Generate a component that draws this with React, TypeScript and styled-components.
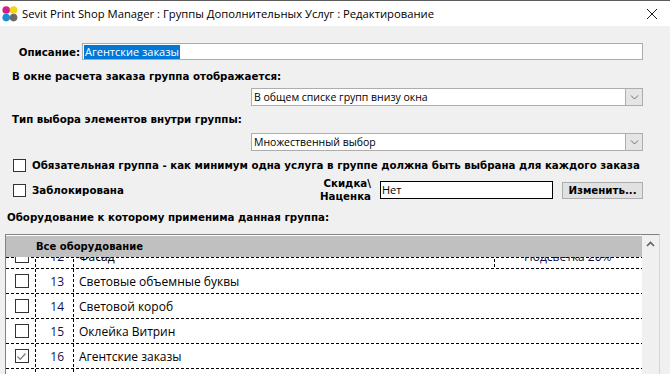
import React from "react";
import styled, { createGlobalStyle } from "styled-components";

type Row = {
  id: number;
  name: string;
  checked: boolean;
};

const ROWS: Row[] = [
  { id: 13, name: "Световые объемные буквы", checked: false },
  { id: 14, name: "Световой короб", checked: false },
  { id: 15, name: "Оклейка Витрин", checked: false },
  { id: 16, name: "Агентские заказы", checked: true },
];

const GlobalStyle = createGlobalStyle`
  html, body {
    margin: 0;
    padding: 0;
    background: #f0f0f0;
  }
  * {
    box-sizing: border-box;
  }
`;

function Logo() {
  return (
    <svg width="16" height="18" viewBox="0 0 16 18">
      <circle cx="4.2" cy="5" r="3.8" fill="#d0208a" />
      <circle cx="11.6" cy="5" r="3.8" fill="#f6d31a" />
      <circle cx="4.2" cy="12.6" r="3.8" fill="#1c8fd2" />
      <circle cx="11.6" cy="12.6" r="3.8" fill="#6a6a6a" />
    </svg>
  );
}

function Chevron({ up }: { up?: boolean }) {
  return (
    <svg width="9" height="6" viewBox="0 0 9 6">
      <path
        d={up ? "M1 5 L4.5 1.5 L8 5" : "M1 1.5 L4.5 5 L8 1.5"}
        fill="none"
        stroke={up ? "#606060" : "#707070"}
        strokeWidth={up ? 1.6 : 1}
      />
    </svg>
  );
}

function CheckMark() {
  return (
    <svg width="11" height="11" viewBox="0 0 11 11">
      <path d="M1.5 5.5 L4.2 8.3 L9.5 2.5" fill="none" stroke="#7a7a7a" strokeWidth="1.2" />
    </svg>
  );
}

function App() {
  return (
    <Window>
      <GlobalStyle />
      <TitleBar>
        <Logo />
        <Title>Sevit Print Shop Manager : Группы Дополнительных Услуг : Редактирование</Title>
        <CloseButton>
          <svg width="12" height="12" viewBox="0 0 12 12">
            <path d="M1 1 L11 11 M11 1 L1 11" stroke="#1a1a1a" strokeWidth="1" />
          </svg>
        </CloseButton>
      </TitleBar>

      <Body>
        <DescRow>
          <DescLabel>Описание:</DescLabel>
          <TextField>
            <Selected>Агентские заказы</Selected>
          </TextField>
        </DescRow>

        <Label $gap={10}>В окне расчета заказа группа отображается:</Label>
        <SelectRow $gap={5}>
          <Select>
            <SelectText>В общем списке групп внизу окна</SelectText>
            <DropButton>
              <Chevron />
            </DropButton>
          </Select>
        </SelectRow>

        <Label $gap={7}>Тип выбора элементов внутри группы:</Label>
        <SelectRow $gap={7}>
          <Select>
            <SelectText>Множественный выбор</SelectText>
            <DropButton>
              <Chevron />
            </DropButton>
          </Select>
        </SelectRow>

        <CheckRow>
          <CheckBox />
          <CheckLabel>
            Обязательная группа - как минимум одна услуга в группе должна быть выбрана для каждого заказа
          </CheckLabel>
        </CheckRow>

        <LockRow>
          <CheckBox />
          <CheckLabel>Заблокирована</CheckLabel>
          <Spacer />
          <DiscountLabel>
            Скидка\
            <br />
            Наценка
          </DiscountLabel>
          <DiscountField>Нет</DiscountField>
          <Button>Изменить...</Button>
        </LockRow>

        <ListLabel>Оборудование к которому применима данная группа:</ListLabel>

        <Grid>
          <GridMain>
            <GridHeader>Все оборудование</GridHeader>
            <GridBody>
              <ScrolledRow>
                <GridRow>
                  <CheckCell>
                    <RowCheck />
                  </CheckCell>
                  <NumCell>12</NumCell>
                  <NameCell $divider>Фасад</NameCell>
                  <ExtraCell>Подсветка 20%</ExtraCell>
                </GridRow>
              </ScrolledRow>
              {ROWS.map((r) => (
                <GridRow key={r.id}>
                  <CheckCell>
                    <RowCheck>{r.checked && <CheckMark />}</RowCheck>
                  </CheckCell>
                  <NumCell>{r.id}</NumCell>
                  <NameCell>{r.name}</NameCell>
                </GridRow>
              ))}
              <GridRow>
                <CheckCell>
                  <RowCheck />
                </CheckCell>
                <NumCell />
                <NameCell />
              </GridRow>
            </GridBody>
          </GridMain>
          <ScrollBar>
            <ScrollArrow>
              <Chevron up />
            </ScrollArrow>
          </ScrollBar>
        </Grid>
      </Body>
    </Window>
  );
}

export default App;

const Window = styled.div`
  width: 670px;
  height: 374px;
  display: flex;
  flex-direction: column;
  overflow: hidden;
  background: #f0f0f0;
  font-family: "DejaVu Sans", sans-serif;
`;

const TitleBar = styled.div`
  height: 26px;
  flex: none;
  display: flex;
  align-items: center;
  padding: 0 0 0 2px;
  background: #fff;
  border-top: 1px solid #5c5c5c;
`;

const Title = styled.div`
  flex: 1;
  margin-left: 4px;
  font-family: "Open Sans", sans-serif;
  font-size: 11.25px;
  color: #000;
  white-space: nowrap;
`;

const CloseButton = styled.div`
  width: 36px;
  display: flex;
  justify-content: center;
  align-items: center;
`;

const Body = styled.div`
  flex: 1;
  display: flex;
  flex-direction: column;
  padding: 0 27px 0 4px;
`;

const DescRow = styled.div`
  display: flex;
  align-items: center;
  margin-top: 17px;
  height: 17px;
`;

const DescLabel = styled.div`
  width: 78px;
  text-align: right;
  padding-right: 2px;
  font-size: 10.25px;
  font-weight: bold;
  color: #000;
`;

const TextField = styled.div`
  flex: 1;
  height: 17px;
  background: #fff;
  border: 1px solid #ababab;
  display: flex;
  align-items: center;
  padding-left: 1px;
`;

const Selected = styled.span`
  background: #0078d7;
  color: #fff;
  font-family: "Open Sans", sans-serif;
  font-size: 11px;
  line-height: 14px;
  padding: 0 1px;
`;

const Label = styled.div<{ $gap: number }>`
  margin-top: ${(p) => p.$gap}px;
  padding-left: 8px;
  font-size: 10.25px;
  font-weight: bold;
  color: #000;
  line-height: 13px;
`;

const SelectRow = styled.div<{ $gap: number }>`
  display: flex;
  justify-content: flex-end;
  margin-top: ${(p) => p.$gap}px;
`;

const Select = styled.div`
  width: 392px;
  height: 18px;
  display: flex;
  align-items: stretch;
  background: #fff;
  border: 1px solid #adadad;
`;

const SelectText = styled.div`
  flex: 1;
  padding-left: 2px;
  font-family: "Open Sans", sans-serif;
  font-size: 10.5px;
  line-height: 16px;
  color: #000;
`;

const DropButton = styled.div`
  width: 17px;
  display: flex;
  align-items: center;
  justify-content: center;
  background: #e5e5e5;
  border-left: 1px solid #adadad;
`;

const CheckRow = styled.div`
  display: flex;
  align-items: center;
  margin-top: 7px;
  padding-left: 9px;
  height: 14px;
`;

const CheckBox = styled.div`
  width: 13px;
  height: 13px;
  flex: none;
  background: #fff;
  border: 1px solid #333;
`;

const CheckLabel = styled.div`
  margin-left: 6px;
  font-size: 10.25px;
  font-weight: bold;
  color: #000;
  white-space: nowrap;
`;

const LockRow = styled.div`
  display: flex;
  align-items: center;
  margin-top: 7px;
  padding-left: 9px;
  height: 22px;
`;

const Spacer = styled.div`
  flex: 1;
`;

const DiscountLabel = styled.div`
  text-align: right;
  font-size: 10.25px;
  font-weight: bold;
  line-height: 13px;
  color: #000;
  margin-right: 9px;
`;

const DiscountField = styled.div`
  width: 173px;
  height: 18px;
  background: #fff;
  border: 1px solid #000;
  font-family: "Open Sans", sans-serif;
  font-size: 11px;
  line-height: 16px;
  padding-left: 1px;
  color: #000;
`;

const Button = styled.div`
  width: 81px;
  height: 17px;
  margin-left: 9px;
  background: #e1e1e1;
  border: 1px solid #adadad;
  display: flex;
  align-items: center;
  justify-content: center;
  font-size: 10.25px;
  font-weight: bold;
  color: #000;
`;

const ListLabel = styled.div`
  margin-top: 10px;
  padding-left: 3px;
  font-size: 10.25px;
  font-weight: bold;
  color: #000;
  line-height: 13px;
`;

const Grid = styled.div`
  margin-top: 10px;
  flex: 1;
  display: flex;
  border-top: 1px solid #828282;
  border-left: 1px solid #828282;
  border-right: 1px solid #d6d6d6;
  margin-left: 1px;
  margin-right: -17px;
`;

const GridMain = styled.div`
  flex: 1;
  display: flex;
  flex-direction: column;
  padding-top: 1px;
  background: #fff;
`;

const GridHeader = styled.div`
  height: 21px;
  flex: none;
  background: #c0c0c0;
  padding-left: 30px;
  font-size: 10px;
  font-weight: bold;
  line-height: 21px;
  color: #000;
`;

const dashH = `repeating-linear-gradient(to right, #000 0 3px, transparent 3px 5px)`;
const dashV = `repeating-linear-gradient(to bottom, #000 0 3px, transparent 3px 5px)`;

const GridBody = styled.div`
  flex: 1;
  display: flex;
  flex-direction: column;
  overflow: hidden;
  background: ${dashH} left top / 100% 1px no-repeat;
`;

const ScrolledRow = styled.div`
  height: 12px;
  flex: none;
  display: flex;
  flex-direction: column;
  justify-content: flex-end;
  overflow: hidden;
`;

const GridRow = styled.div`
  height: 25px;
  flex: none;
  display: flex;
  align-items: stretch;
  background: ${dashH} left bottom / 100% 1px no-repeat;
`;

const Cell = styled.div`
  display: flex;
  align-items: center;
  height: 24px;
  flex: none;
  font-family: "Open Sans", sans-serif;
  font-size: 12px;
  color: #000;
  white-space: nowrap;
  background: ${dashV} right top / 1px 100% no-repeat;
`;

const CheckCell = styled(Cell)`
  width: 30px;
  justify-content: center;
`;

const NumCell = styled(Cell)`
  width: 38px;
  justify-content: flex-end;
  padding-right: 10px;
  color: #10104a;
`;

const NameCell = styled(Cell)<{ $divider?: boolean }>`
  flex: ${(p) => (p.$divider ? "none" : "1")};
  width: ${(p) => (p.$divider ? "421px" : "auto")};
  padding-left: 5px;
  background: ${(p) => (p.$divider ? `${dashV} right top / 1px 100% no-repeat` : "none")};
`;

const ExtraCell = styled(Cell)`
  flex: 1;
  padding-left: 29px;
  color: #10104a;
  background: none;
`;

const RowCheck = styled.div`
  width: 14px;
  height: 14px;
  margin-left: 1px;
  border: 1px solid #333;
  background: #fff;
  display: flex;
  align-items: center;
  justify-content: center;
`;

const ScrollBar = styled.div`
  width: 17px;
  flex: none;
  background: #f0f0f0;
  display: flex;
  flex-direction: column;
`;

const ScrollArrow = styled.div`
  height: 17px;
  display: flex;
  align-items: center;
  justify-content: center;
`;
